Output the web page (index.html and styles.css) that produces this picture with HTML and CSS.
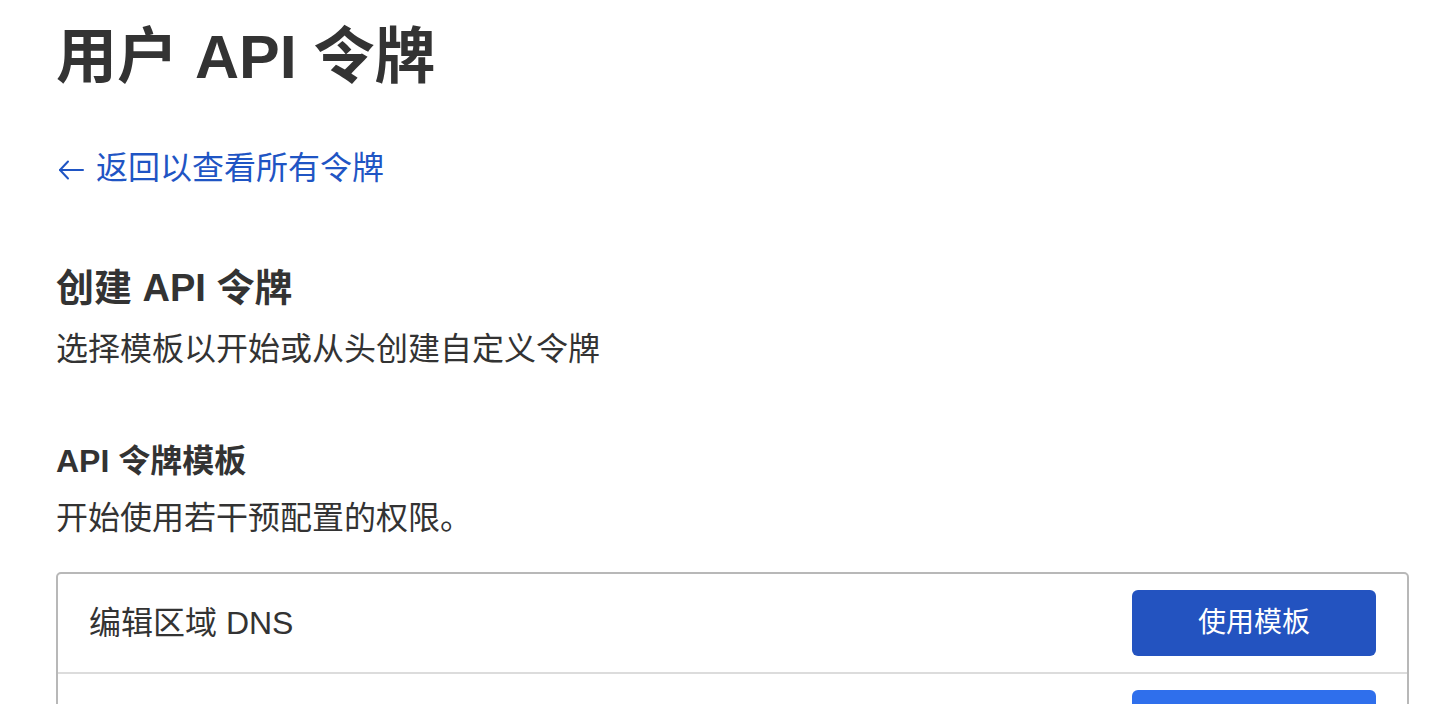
FILE: index.html
```html
<!DOCTYPE html>
<html lang="zh-CN">

<head>
    <meta charset="UTF-8">
    <meta name="viewport" content="width=device-width, initial-scale=1.0">
    <title>用户 API 令牌</title>
    <link rel="stylesheet" href="styles.css">
</head>

<body>
    <div class="page">
        <h1 class="page-title">用户 API 令牌</h1>

        <!-- 返回链接 -->
        <a class="back-link" href="#">
            <svg class="back-icon" viewBox="0 0 26 26" width="26" height="26" fill="none" stroke="currentColor"
                stroke-width="2" stroke-linecap="round" stroke-linejoin="round">
                <path d="M25 13H2"></path>
                <path d="M10 4.5l-8 8.5 8 8.5"></path>
            </svg>
            <span>返回以查看所有令牌</span>
        </a>

        <h2 class="section-title">创建 API 令牌</h2>
        <p class="section-desc">选择模板以开始或从头创建自定义令牌</p>

        <h3 class="sub-title">API 令牌模板</h3>
        <p class="sub-desc">开始使用若干预配置的权限。</p>

        <!-- 模板列表 -->
        <ul class="template-list">
            <li class="template-row">
                <span class="template-name">编辑区域 DNS</span>
                <a class="btn" href="#">使用模板</a>
            </li>
            <li class="template-row">
                <span class="template-name">读取计费信息</span>
                <a class="btn btn-hover" href="#">使用模板</a>
            </li>
        </ul>
    </div>
</body>

</html>
```

FILE: styles.css
```css
* {
    margin: 0;
    padding: 0;
    box-sizing: border-box;
}

body {
    font-family: "Liberation Sans", "Noto Sans CJK SC", sans-serif;
    color: #333;
    background: #fff;
}

.page {
    padding: 20px 25px 0 56px;
}

/* 页面标题 */
.page-title {
    font-size: 61px;
    line-height: 75px;
    font-weight: 600;
}

/* 返回链接 */
.back-link {
    display: inline-flex;
    align-items: center;
    gap: 12px;
    margin-top: 53px;
    font-size: 32px;
    line-height: 40px;
    color: #1f55c4;
    text-decoration: none;
}

.back-icon {
    display: block;
    margin-left: 2px;
    margin-top: 4px;
}

/* 创建令牌部分 */
.section-title {
    margin-top: 76px;
    font-size: 38px;
    line-height: 48px;
    font-weight: 600;
}

.section-desc {
    margin-top: 17px;
    font-size: 32px;
    line-height: 40px;
}

.sub-title {
    margin-top: 72px;
    font-size: 32px;
    line-height: 40px;
    font-weight: 600;
}

.sub-desc {
    margin-top: 17px;
    font-size: 32px;
    line-height: 40px;
}

/* 模板列表 */
.template-list {
    list-style: none;
    margin-top: 34px;
    border: 2px solid #b8b8b8;
    border-radius: 5px;
}

.template-row {
    display: flex;
    align-items: center;
    justify-content: space-between;
    padding: 16px 31px;
    border-bottom: 2px solid #dcdcdc;
}

.template-name {
    font-size: 32px;
    line-height: 40px;
}

.btn {
    display: inline-block;
    height: 66px;
    padding: 0 66px;
    line-height: 66px;
    font-size: 28px;
    color: #fff;
    text-decoration: none;
    background: #2353c0;
    border-radius: 6px;
}

.btn-hover {
    background: #2f6fec;
}
```
